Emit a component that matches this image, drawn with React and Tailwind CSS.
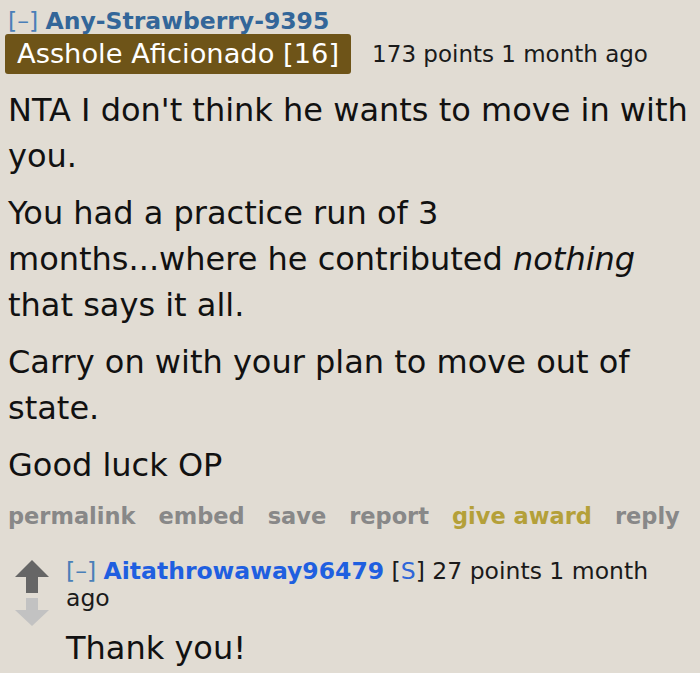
import React from 'react';

const font = "font-['DejaVu_Sans','Verdana',sans-serif]";

function UpArrow({ color }) {
  return (
    <svg width="34" height="33" viewBox="0 0 34 33">
      <path d="M17 0 L34 17 L23 17 L23 33 L11 33 L11 17 L0 17 Z" fill={color} />
    </svg>
  );
}

function DownArrow({ color }) {
  return (
    <svg width="34" height="28" viewBox="0 0 34 28">
      <path d="M11 0 L23 0 L23 12 L34 12 L17 28 L0 12 L11 12 Z" fill={color} />
    </svg>
  );
}

export default function App() {
  return (
    <div className={`w-[700px] h-[673px] bg-[#e1dcd3] overflow-hidden ${font}`}>
      <div className="pl-2 pt-[8px]">
        {/* author */}
        <div className="text-[23.5px] leading-[26px] whitespace-nowrap">
          <span className="text-[#4a7fb8]">[–]</span>{' '}
          <span className="font-bold text-[#336699]">Any-Strawberry-9395</span>
        </div>

        {/* flair + score */}
        <div className="flex items-center mt-0 -ml-[3px]">
          <span className="h-[40px] px-[12px] flex items-center rounded-[3px] bg-[#6e5418] text-white text-[27.3px] whitespace-nowrap">
            Asshole Aficionado [16]
          </span>
          <span className="ml-[21px] text-[23px] text-[#1a1a1a] whitespace-nowrap">173 points 1 month ago</span>
        </div>

        {/* body */}
        <div className="mt-[13px] text-[32px] leading-[46px] text-[#111] whitespace-nowrap">
          <p>NTA I don't think he wants to move in with<br />you.</p>
          <p className="mt-[11px]">
            You had a practice run of 3<br />
            months...where he contributed <em>nothing</em><br />
            that says it all.
          </p>
          <p className="mt-[11px]">Carry on with your plan to move out of<br />state.</p>
          <p className="mt-[11px]">Good luck OP</p>
        </div>

        {/* actions */}
        <div className="mt-[15px] flex gap-[23px] text-[22.5px] leading-[26px] font-bold text-[#888888] whitespace-nowrap">
          <span>permalink</span>
          <span>embed</span>
          <span>save</span>
          <span>report</span>
          <span className="text-[#b4a039]">give award</span>
          <span>reply</span>
        </div>

        {/* child comment */}
        <div className="mt-[29px] flex">
          <div className="ml-[7px] w-[51px] flex flex-col items-start pt-[2px] gap-[5px]">
            <UpArrow color="#666666" />
            <DownArrow color="#c2c2c2" />
          </div>
          <div>
            <div className="text-[23.5px] leading-[27px] text-[#1a1a1a] whitespace-nowrap">
              <span className="text-[#4a7fb8]">[–]</span>{' '}
              <span className="font-bold text-[#1f5fe0]">Aitathrowaway96479</span>{' '}
              [<span className="text-[#2f66d8]">S</span>] 27 points 1 month<br />ago
            </div>
            <div className="mt-[14px] text-[32px] leading-[44px] text-[#111]">Thank you!</div>
          </div>
        </div>
      </div>
    </div>
  );
}
